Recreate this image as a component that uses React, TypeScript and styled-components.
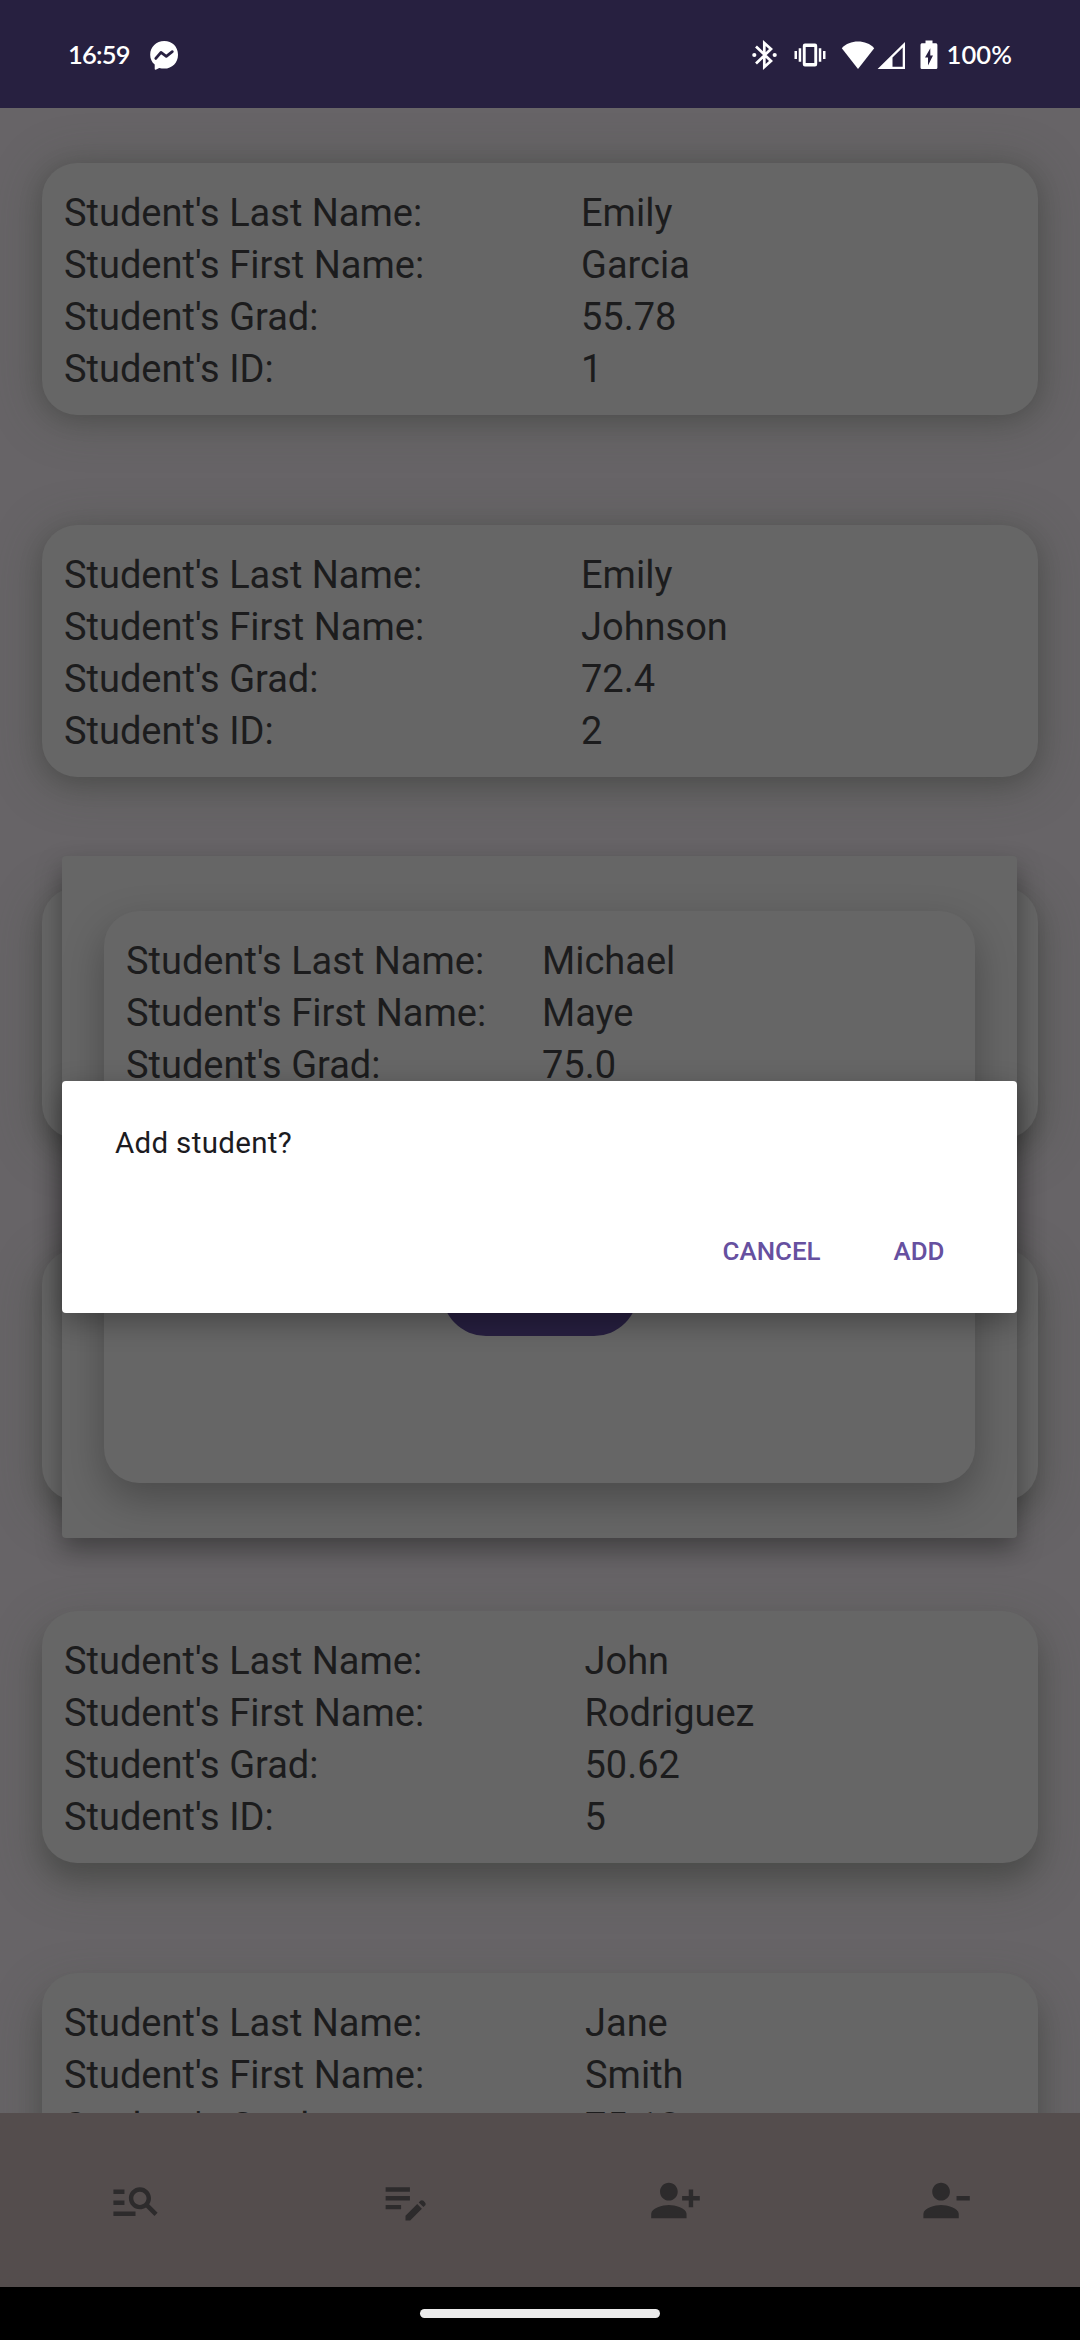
import React from "react";
import styled, { createGlobalStyle } from "styled-components";

const GlobalStyle = createGlobalStyle`
  * { box-sizing: border-box; }
  html, body { margin: 0; padding: 0; background: #000; }
  body { font-family: Roboto, "Noto Sans", sans-serif; }
`;

const Screen = styled.div`
  position: relative;
  display: flex;
  flex-direction: column;
  width: 1080px;
  height: 2340px;
  overflow: hidden;
  background: #676467;
`;

const StatusBar = styled.header`
  display: flex;
  flex: none;
  align-items: center;
  height: 108px;
  padding: 2px 68px 0 68px;
  background: #272040;
  color: #fff;
  svg { display: block; flex: none; }
`;

const StatusText = styled.span<{ $width?: number; $tracking?: number }>`
  flex: none;
  width: ${(p) => (p.$width ? `${p.$width}px` : "auto")};
  padding-bottom: 3px;
  font-family: Lato, Roboto, sans-serif;
  font-size: 25.5px;
  font-weight: 600;
  line-height: 32px;
  letter-spacing: ${(p) => p.$tracking ?? 0}px;
`;

const Spacer = styled.div<{ $w?: number }>`
  ${(p) => (p.$w ? `flex: none; width: ${p.$w}px;` : "flex: 1;")}
`;

const List = styled.main`
  display: flex;
  flex: 1;
  flex-direction: column;
  gap: 110px;
  min-height: 0;
  overflow: hidden;
  padding: 55px 42px 0;
`;

const Card = styled.section<{ $drop: number }>`
  flex: none;
  height: 252px;
  padding: 24px 22px 20px;
  border-radius: 35px;
  background: #666;
  box-shadow:
    0 ${(p) => p.$drop}px 24px rgba(0, 0, 0, 0.16),
    0 ${(p) => p.$drop}px 46px 4px rgba(72, 79, 68, 0.42);
`;

const Row = styled.div<{ $label: number }>`
  display: grid;
  grid-template-columns: ${(p) => p.$label}px 1fr;
  height: 52px;
  font-size: 38px;
  line-height: 52px;
  color: #1c1c1d;
  white-space: nowrap;
`;

const BottomBar = styled.nav`
  display: grid;
  flex: none;
  grid-template-columns: repeat(4, 1fr);
  place-items: center;
  height: 174px;
  background: #544d4d;
`;

const NavIcon = styled.svg`
  display: block;
  width: 53px;
  height: 53px;
  fill: #2d2b2c;
`;

const GestureArea = styled.footer`
  display: flex;
  flex: none;
  justify-content: center;
  height: 53px;
  padding-top: 22px;
  background: #000;
`;

const GestureHandle = styled.div`
  width: 240px;
  height: 9px;
  border-radius: 5px;
  background: #ebebeb;
`;

const Overlay = styled.div`
  position: absolute;
  top: 108px;
  left: 0;
  display: flex;
  align-items: center;
  justify-content: center;
  width: 1079px;
  height: 2178px;
`;

const StudentDialog = styled.div`
  display: flex;
  width: 955px;
  height: 682px;
  padding: 55px 42px;
  border-radius: 4px;
  background: #666;
  box-shadow: 0 12px 26px rgba(0, 0, 0, 0.34);
`;

const DialogCard = styled.div`
  display: flex;
  flex: 1;
  flex-direction: column;
  padding: 24px 22px 147px;
  border-radius: 35px;
  background: #666;
  box-shadow: 0 16px 40px rgba(0, 0, 0, 0.28);
`;

const PillButton = styled.button`
  align-self: center;
  width: 196px;
  height: 88px;
  margin-top: auto;
  border: 0;
  border-radius: 44px;
  background: #271f40;
`;

const Alert = styled.div`
  display: flex;
  flex-direction: column;
  justify-content: space-between;
  width: 955px;
  height: 232px;
  padding: 43px 50.5px 40px 53px;
  border-radius: 4px;
  background: #fff;
  box-shadow: 0 9px 29px rgba(0, 0, 0, 0.32);
`;

const AlertText = styled.p`
  margin: 0;
  font-size: 29.5px;
  line-height: 38px;
  letter-spacing: 0.32px;
  color: #1c1b1f;
`;

const AlertActions = styled.div`
  display: flex;
  justify-content: flex-end;
  gap: 29px;
`;

const TextButton = styled.button`
  padding: 0 22px;
  border: 0;
  background: none;
  font-family: inherit;
  font-size: 25.9px;
  font-weight: 500;
  line-height: 44px;
  color: #6650a0;
`;

type Student = { values: string[]; label: number; drop: number };

const fields = [
  "Student's Last Name:",
  "Student's First Name:",
  "Student's Grad:",
  "Student's ID:",
];

const students: Student[] = [
  { values: ["Emily", "Garcia", "55.78", "1"], label: 517, drop: 4 },
  { values: ["Emily", "Johnson", "72.4", "2"], label: 517, drop: 7 },
  { values: [], label: 517, drop: 10 },
  { values: [], label: 517, drop: 13 },
  { values: ["John", "Rodriguez", "50.62", "5"], label: 520.5, drop: 17 },
  { values: ["Jane", "Smith", "75.18"], label: 521, drop: 20 },
];

const navIcons = [
  "M7 9H2V7h5v2zm0 3H2v2h5v-2zm13.59 7l-3.83-3.83c-.8.52-1.74.83-2.76.83-2.76 0-5-2.24-5-5s2.24-5 5-5 5 2.24 5 5c0 1.02-.31 1.96-.83 2.75L22 17.59 20.59 19zM17 11c0-1.65-1.35-3-3-3s-3 1.35-3 3 1.35 3 3 3 3-1.35 3-3zM2 19h10v-2H2v2z",
  "M3 10h11v2H3v-2zm0-2h11V6H3v2zm0 8h7v-2H3v2zm15.01-3.13.71-.71c.39-.39 1.02-.39 1.41 0l.71.71c.39.39.39 1.02 0 1.41l-.71.71-2.12-2.12zm-.71.71-5.3 5.3V21h2.12l5.3-5.3-2.12-2.12z",
  "M13 8c0-2.21-1.79-4-4-4S5 5.79 5 8s1.79 4 4 4 4-1.79 4-4zm2 2v2h3v3h2v-3h3v-2h-3V7h-2v3h-3zM1 18v2h16v-2c0-2.66-5.33-4-8-4s-8 1.34-8 4z",
  "M14 8c0-2.21-1.79-4-4-4S6 5.79 6 8s1.79 4 4 4 4-1.79 4-4zm3 2v2h6v-2h-6zM2 18v2h16v-2c0-2.66-5.33-4-8-4s-8 1.34-8 4z",
];

const StatusIcons = () => (
  <>
    <svg width="25" height="30" viewBox="0 0 25 30" fill="none" stroke="#fff" strokeWidth="2.7">
      <path d="M4 6.5L19 21l-6.700 6V3l6.700 6L4 23.500" />
      <circle cx="2.300" cy="15" r="2.100" fill="#fff" stroke="none" />
      <circle cx="22.700" cy="15" r="2.100" fill="#fff" stroke="none" />
    </svg>
    <Spacer $w={17} />
    <svg width="32" height="30" viewBox="0 0 32 30" fill="#fff">
      <path
        fillRule="evenodd"
        d="M11 3.600h10a2.200 2.200 0 0 1 2.200 2.200v18.400a2.200 2.200 0 0 1-2.200 2.200H11a2.200 2.200 0 0 1-2.200-2.200V5.800A2.200 2.200 0 0 1 11 3.600zm.7 3.400v16h8.600V7z"
      />
      <path d="M4.700 8.200h2.500v13.600H4.700zM24.800 8.200h2.500v13.600h-2.500zM.5 11H3v8H.5zM29 11h2.500v8H29z" />
    </svg>
    <Spacer $w={15} />
    <svg width="34" height="30" viewBox="0 0 34 30" fill="#fff">
      <path d="M.8 8.200C5 3.900 10.600 1.600 17 1.600s12 2.300 16.200 6.600L17 29z" />
    </svg>
    <Spacer $w={2} />
    <svg width="29" height="30" viewBox="0 0 29 30" fill="#fff">
      <path fillRule="evenodd" d="M28 2v27H.6zm-2.300 5.600L15.500 17.600v9.200h10.200z" />
    </svg>
    <Spacer $w={14} />
    <svg width="18" height="30" viewBox="0 0 18 30" fill="#fff">
      <path
        fillRule="evenodd"
        d="M5.500 0.500h7v2.700h3.200c.9 0 1.700.7 1.700 1.700v22.500c0 1-.8 1.700-1.700 1.700H2.200c-.9 0-1.700-.7-1.700-1.700v-22.500c0-1 .8-1.700 1.700-1.700h3.300zM10.300 8.200L5 17.600h3v8l5-10h-2.700z"
      />
    </svg>
  </>
);

const App: React.FC = () => (
  <Screen>
    <GlobalStyle />
    <StatusBar>
      <StatusText $width={81} $tracking={-0.8}>16:59</StatusText>
      <svg width="30" height="30" viewBox="0 0 30 30">
        <path
          fill="#fff"
          d="M15.300 1C7.300 1 1.200 6.800 1.200 14.700c0 4 1.700 7.500 4.500 9.900v4.400c0 .6.500.9 1 .7l3.500-1.800c1.600.5 3.300.7 5.100.7 7.800 0 13.700-5.900 13.700-13.900S23.100 1 15.300 1z"
        />
        <path d="M7.500 18.700l5.200-6 5.300 3.900 6-4.600" transform="translate(-.7 -.3)" fill="none" stroke="#272040" strokeWidth="2.800" strokeLinejoin="round" strokeLinecap="round" />
      </svg>
      <Spacer />
      <StatusIcons />
      <Spacer $w={9} />
      <StatusText $tracking={0.1}>100%</StatusText>
    </StatusBar>

    <List>
      {students.map((student, i) => (
        <Card key={i} $drop={student.drop}>
          {student.values.map((value, j) => (
            <Row key={fields[j]} $label={student.label}>
              <span>{fields[j]}</span>
              <span>{value}</span>
            </Row>
          ))}
        </Card>
      ))}
    </List>

    <BottomBar>
      {navIcons.map((d) => (
        <NavIcon key={d} viewBox="0 0 24 24">
          <path d={d} />
        </NavIcon>
      ))}
    </BottomBar>
    <GestureArea>
      <GestureHandle />
    </GestureArea>

    <Overlay>
      <StudentDialog>
        <DialogCard>
          {["Michael", "Maye", "75.0"].map((value, j) => (
            <Row key={value} $label={416}>
              <span>{fields[j]}</span>
              <span>{value}</span>
            </Row>
          ))}
          <PillButton />
        </DialogCard>
      </StudentDialog>
    </Overlay>
    <Overlay>
      <Alert>
        <AlertText>Add student?</AlertText>
        <AlertActions>
          <TextButton>CANCEL</TextButton>
          <TextButton>ADD</TextButton>
        </AlertActions>
      </Alert>
    </Overlay>
  </Screen>
);

export default App;
